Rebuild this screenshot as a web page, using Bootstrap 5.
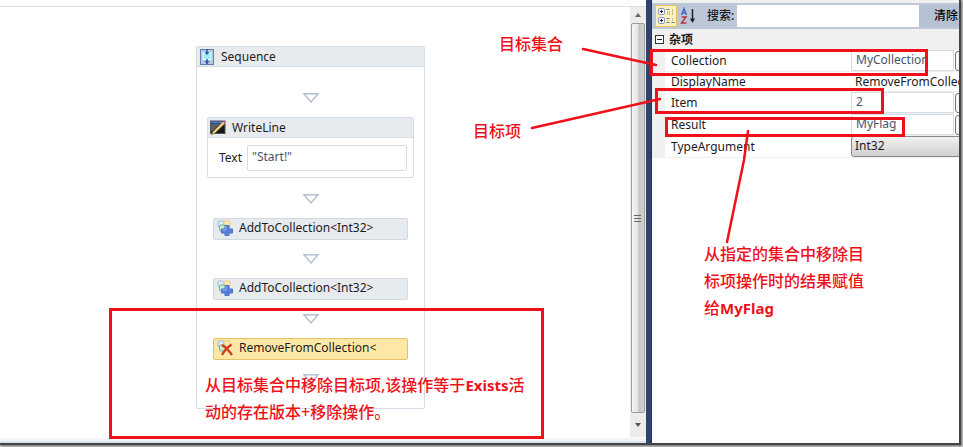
<!DOCTYPE html>
<html lang="zh-CN">
<head>
<meta charset="utf-8">
<meta name="viewport" content="width=device-width, initial-scale=1">
<title>Sequence</title>
<link href="https://cdn.jsdelivr.net/npm/bootstrap@5.3.0/dist/css/bootstrap.min.css" rel="stylesheet">
<style>
:root { --ink: #1b1b1b; --edge: #d5dce6; --head: #e7ebee; --mark: #ee1119; --value: #44546c; }
body { font: 12px/16px "Noto Sans", "Noto Sans CJK SC", sans-serif; color: var(--ink); background: #c4c4c4; }
.app-window { background: #fff; border-right: 2px solid #444; border-bottom: 2px solid #444; box-shadow: 1px 1px 2px #777; margin: 0 2px 2px 0; min-height: calc(100vh - 2px); }
.pane-top { height: 7px; background: #fdfdfd; border-bottom: 1px solid #d8e0e8; }
.pane-bottom { height: 6px; background: #f3f5f8; border-top: 1px solid #fff; border-bottom: 2px solid #dde3ec; }
.canvas { padding: 39px 9px 24px 0; }
.splitter { width: 6px; background: #2f4468; border-right: 1px solid #23375a; }
.track { width: 16px; background: #ececec; padding: 0 1px; }
.track-end { height: 16px; }
.thumb { border: 1px solid #9c9c9c; border-radius: 2px; background: linear-gradient(90deg, #f6f6f6, #e6e6e8 45%, #c4c5c9 60%, #cfd0d4); }
.sequence { width: 229px; border: 1px solid var(--edge); border-radius: 2px; }
.act-head { height: 20px; background: var(--head); border-bottom: 1px solid var(--edge); }
.sequence > .act-head { padding-left: 3px; gap: 7px; }
.flow { padding: 26px 0 24px; }
.drop { height: 10px; width: 16px; }
.activity { width: 207px; border: 1px solid var(--edge); border-radius: 2px; margin: 14px 0 16px; }
.activity .act-head { padding-left: 2px; gap: 6px; }
.activity .fields { padding: 7px 6px 6px 11px; gap: 5px; }
.expr { min-width: 0; border: 1px solid var(--edge); border-radius: 2px; background: #fff; color: var(--value); height: 26px; padding: 0 4px 3px; }
.step { width: 195px; height: 22px; border: 1px solid #d0d8e2; border-radius: 2px; background: var(--head); margin: 14px 0; padding: 0 0 2px 3px; gap: 6px; color: var(--ink); text-align: left; }
.step-active { background: #ffe8a6; border-color: #e5c365; }
.side { width: 307px; }
.tools { background: #bcc7d8; height: 26px; margin-top: 3px; padding-left: 3px; }
.tools label { font-weight: 500; }
.tool { border: 1px solid transparent; background: none; padding: 1px; width: 22px; height: 22px; }
.tool-on { background: #fff0c0; border-color: #e5c365; }
.search-box { min-width: 0; border: 0; height: 22px; margin-left: 3px; }
.clear-btn { border: 0; background: #b6c2d4; width: 40px; height: 22px; padding: 0 0 0 14px; white-space: nowrap; overflow: hidden; font-weight: 500; }
.side-top { background: #f0f0f0; }
.group-head { height: 21px; padding-left: 3px; gap: 5px; background: #f0f0f0; font-weight: 600; }
.prop { height: 22px; border-left: 13px solid #f0f0f0; border-bottom: 1px solid #f0f0f0; }
.prop-flat { height: 20px; }
.prop label { width: 186px; padding-left: 6px; flex: none; }
.prop .expr { width: 103px; height: 21px; flex: none; border-radius: 0; }
.prop .plain { border: 0; padding: 0 0 0 4px; width: 108px; height: 18px; color: var(--ink); background: #fff; }
.more { flex: none; width: 22px; height: 20px; margin-left: 1px; border: 1px solid #777; border-radius: 3px; background: #f6f6f6; padding: 0; }
.type-pick { flex: none; width: 130px; height: 21px; border: 1px solid #8a8a8a; border-radius: 3px; background: linear-gradient(#f0f0f0, #d0d0d0); padding: 0 0 2px 3px; color: var(--ink); appearance: none; }
.notes { pointer-events: none; overflow: hidden; color: var(--mark); font: 500 16px/27px "Noto Sans", "Noto Sans CJK SC", sans-serif; }
.notes p { position: absolute; margin: 0; white-space: nowrap; }
.note-set { left: 499px; top: 31px; }
.note-item { left: 473px; top: 118px; }
.note-result { left: 704px; top: 241px; }
.note-remove { left: 205px; top: 372px; }
.notes b { font-weight: 700; font-size: 15px; }
svg { flex: none; display: block; }
</style>
<script src="https://cdn.jsdelivr.net/npm/bootstrap@5.3.0/dist/js/bootstrap.bundle.min.js"></script>
</head>
<body class="position-relative overflow-hidden">
<svg width="0" height="0" class="position-absolute" aria-hidden="true">
  <symbol id="tri" viewBox="0 0 16 10"><path d="M1 .8H15L8 9Z" fill="#fff" stroke="#b7c0cf" stroke-width="1.4"/></symbol>
  <symbol id="items" viewBox="0 0 16 16">
    <rect x="1" y="1" width="6" height="6" rx="1" fill="#d9ecf8" stroke="#9dbfda"/>
    <rect x="7" y="1" width="6" height="6" rx="1" fill="#fbe9b4" stroke="#e5c887"/>
    <rect x="2.500" y="5" width="6" height="6" rx="1" fill="#c9ebcf" stroke="#72b98f"/>
  </symbol>
  <symbol id="add" viewBox="0 0 16 16"><use href="#items"/><path d="M8 5.500h4v3.500h3.500v4H12v2.800H8V13H4.500V9H8Z" fill="#5580da" stroke="#4a70c4"/><path d="M9 6v4H5.500" fill="none" stroke="#93b2f0"/></symbol>
</svg>

<div class="app-window d-flex">
  <main class="d-flex flex-column flex-grow-1">
    <div class="pane-top"></div>
    <div class="d-flex flex-grow-1">
      <div class="canvas flex-grow-1 d-flex justify-content-center align-items-start">
        <section class="sequence">
          <div class="act-head d-flex align-items-center">
            <svg width="14" height="16" viewBox="0 0 14 16"><rect x=".5" y=".5" width="13" height="15" fill="#b8c8dd" stroke="#5f7fae"/><rect x="3" y="3.500" width="8" height="7" fill="#9eeefa" stroke="#eefcff"/><path d="M7 0v4M7 10v5" stroke="#2c59b8" stroke-width="1.500"/><path d="M4.500 3h5L7 6ZM4.500 12h5L7 15Z" fill="#2c59b8"/></svg>
            <span>Sequence</span>
          </div>
          <div class="flow d-flex flex-column align-items-center">
            <svg class="drop"><use href="#tri"/></svg>
            <section class="activity">
              <div class="act-head d-flex align-items-center">
                <svg width="16" height="16" viewBox="0 0 16 16"><rect x=".5" y="1" width="14.500" height="12.500" fill="#161616" stroke="#555"/><path d="M1 1.500h13.500v2H1Z" fill="#4d7fd8"/><path d="M1 4h9L1 12Z" fill="#59616b"/><path d="M13 1.500 15 3.500 5 13 1.500 15 3 11.500Z" fill="#efd48a" stroke="#8a6a2c" stroke-width=".6"/><path d="m13 1.500 2 2 .8-1.300L14.300.8Z" fill="#cc6570"/></svg>
                <span>WriteLine</span>
              </div>
              <div class="fields d-flex align-items-center">
                <label for="wl-text">Text</label>
                <input class="expr flex-grow-1" id="wl-text" value="&quot;Start!&quot;">
              </div>
            </section>
            <svg class="drop"><use href="#tri"/></svg>
            <button type="button" class="step d-flex align-items-center"><svg width="16" height="16"><use href="#add"/></svg>AddToCollection&lt;Int32&gt;</button>
            <svg class="drop"><use href="#tri"/></svg>
            <button type="button" class="step d-flex align-items-center"><svg width="16" height="16"><use href="#add"/></svg>AddToCollection&lt;Int32&gt;</button>
            <svg class="drop"><use href="#tri"/></svg>
            <button type="button" class="step step-active d-flex align-items-center"><svg width="16" height="16" viewBox="0 0 16 16"><use href="#items"/><path d="M5 5Q10 8 15 15M14.500 4.500Q9 8 5 15" fill="none" stroke="#d33a1c" stroke-width="2.200"/></svg>RemoveFromCollection&lt;</button>
            <svg class="drop"><use href="#tri"/></svg>
          </div>
        </section>
      </div>
      <div class="track d-flex flex-column">
        <div class="track-end d-flex align-items-center justify-content-center"><svg width="6" height="4"><path d="M0 4 3 0l3 4Z" fill="#666"/></svg></div>
        <div class="thumb flex-grow-1 d-flex align-items-center justify-content-center"><svg width="8" height="9"><path d="M0 1.500h7M0 4.500h7M0 7.500h7" stroke="#666"/></svg></div>
        <div class="track-end d-flex align-items-center justify-content-center my-1"><svg width="6" height="4"><path d="M0 0h6L3 4Z" fill="#555"/></svg></div>
      </div>
    </div>
    <div class="pane-bottom"></div>
  </main>
  <div class="splitter flex-shrink-0"></div>
  <aside class="side flex-shrink-0 overflow-hidden">
    <div class="side-top overflow-hidden">
      <div class="tools d-flex align-items-center">
        <button type="button" class="tool tool-on" aria-label="分类"><svg width="18" height="18" viewBox="0 0 18 18"><g fill="#fff" stroke="#7d9cc4"><rect x="1.500" y="1.500" width="6" height="6" rx="1.500"/><rect x="1.500" y="10.500" width="6" height="6" rx="1.500"/></g><path d="M3 4.500h3M4.500 3v3M3 13.500h3M4.500 12v3" stroke="#222"/><path d="M9.500 2.500h3M9.500 11.500h3M9.500 15.500h3M14.500 15.500h3" stroke="#6b7c96"/><path d="M10.500 4v4M12.500 4v4M15.500 2v6M10.500 13v1.500M15.500 11v3" stroke="#c9bd93"/></svg></button>
        <button type="button" class="tool" aria-label="按字母排序"><svg width="18" height="18" viewBox="0 0 18 18"><path d="M2.500 8 5 1.500 7.500 8M3.300 6h3.500" fill="none" stroke="#3c68b8" stroke-width="1.400"/><path d="M2.500 10h4.500l-4.500 6h5" fill="none" stroke="#b03a4a" stroke-width="1.500"/><path d="M13.500 2v12" stroke="#222" stroke-width="1.500"/><path d="M11 11.500h5l-2.500 4.500Z" fill="#222"/></svg></button>
        <label for="find" class="ps-2">搜索:</label>
        <input id="find" class="search-box flex-grow-1">
        <button type="button" class="clear-btn">清除</button>
      </div>
    </div>
    <div class="group-head d-flex align-items-center">
      <svg width="9" height="9"><rect x=".5" y=".5" width="8" height="8" fill="#fff" stroke="#333"/><path d="M2 4.500h5" stroke="#222"/></svg>
      <span>杂项</span>
    </div>
    <div class="prop d-flex align-items-center"><label for="p1">Collection</label><input class="expr" id="p1" value="MyCollection"><button type="button" class="more" aria-label="Collection …"></button></div>
    <div class="prop prop-flat d-flex align-items-center"><label for="p2">DisplayName</label><input class="plain" id="p2" value="RemoveFromCollection&lt;Int32&gt;"></div>
    <div class="prop d-flex align-items-center"><label for="p3">Item</label><input class="expr" id="p3" value="2"><button type="button" class="more" aria-label="Item …"></button></div>
    <div class="prop d-flex align-items-center"><label for="p4">Result</label><input class="expr" id="p4" value="MyFlag"><button type="button" class="more" aria-label="Result …"></button></div>
    <div class="prop d-flex align-items-center"><label for="p5">TypeArgument</label><select class="type-pick" id="p5"><option>Int32</option></select></div>
  </aside>
</div>

<div class="notes position-absolute top-0 start-0 w-100 h-100">
  <svg width="963" height="447" fill="none" stroke="#ee1119" stroke-width="3">
    <path d="M110.500 309.500h432v128h-432ZM651.500 50.500h275v24h-275ZM656.500 89.500h226v23h-226ZM666.500 118.500h237v17h-237Z"/>
    <path d="M583 49 656 65M532 128 660 99M748 131 744 160 727 242" stroke-width="2.500" stroke-linecap="round"/>
  </svg>
  <p class="note-set">目标集合</p>
  <p class="note-item">目标项</p>
  <p class="note-result">从指定的集合中移除目<br>标项操作时的结果赋值<br>给<b>MyFlag</b></p>
  <p class="note-remove">从目标集合中移除目标项,该操作等于<b>Exists</b>活<br>动的存在版本+移除操作。</p>
</div>
</body>
</html>
